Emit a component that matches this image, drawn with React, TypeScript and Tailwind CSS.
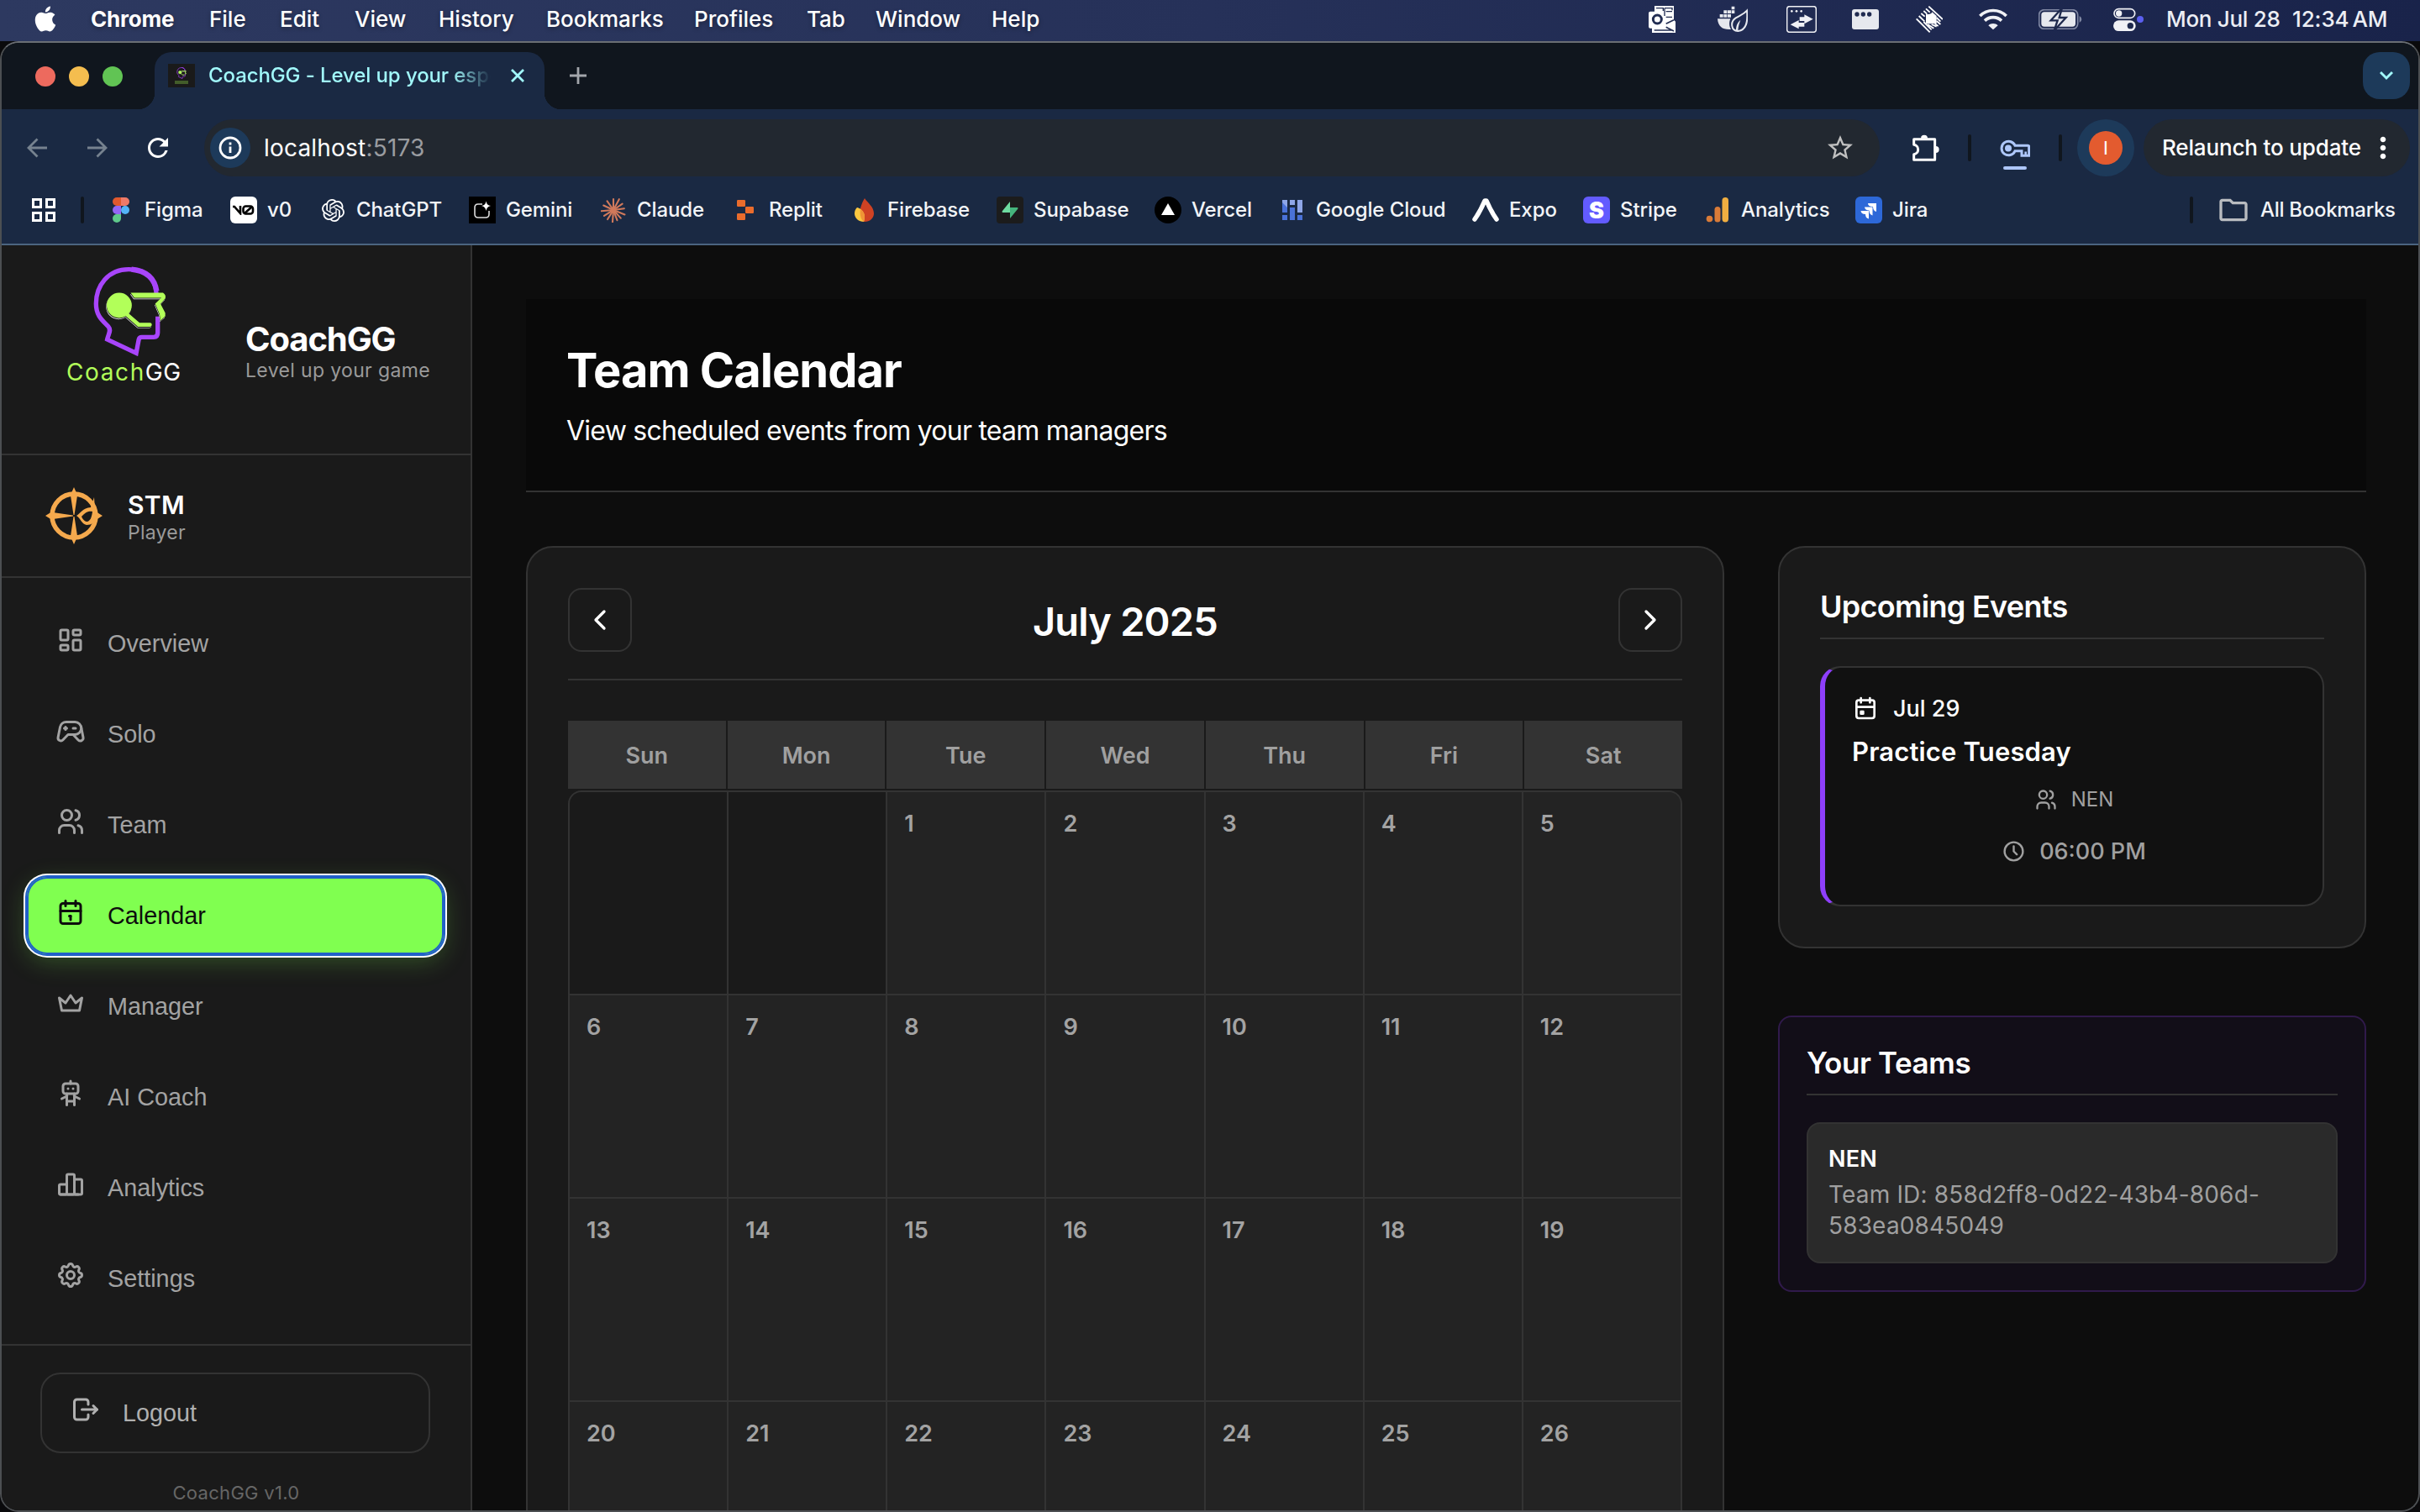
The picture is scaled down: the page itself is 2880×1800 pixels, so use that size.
import React from "react";
import {
  TbLayoutDashboard,
  TbDeviceGamepad2,
  TbUsers,
  TbCalendar,
  TbCrown,
  TbRobot,
  TbChartBar,
  TbSettings,
  TbLogout,
  TbCalendarEvent,
  TbClock,
  TbChevronLeft,
  TbChevronRight,
} from "react-icons/tb";
import { MdStarOutline, MdOutlineFolder, MdRefresh, MdMoreVert } from "react-icons/md";
import { SiOpenai, SiApple } from "react-icons/si";

/* ---------- macOS menu bar ---------- */

const menus = [
  { label: "Chrome", cls: "w-[141px] font-bold tracking-[-0.2px]" },
  { label: "File", cls: "w-[84px]" },
  { label: "Edit", cls: "w-[89px]" },
  { label: "View", cls: "w-[100px]" },
  { label: "History", cls: "w-[128px]" },
  { label: "Bookmarks", cls: "w-[176px]" },
  { label: "Profiles", cls: "w-[134px]" },
  { label: "Tab", cls: "w-[82px]" },
  { label: "Window", cls: "w-[138px]" },
  { label: "Help", cls: "w-[80px]" },
];

function OutlookIcon() {
  return (
    <svg className="h-8 w-8" viewBox="0 0 96 96" fill="none">
      <path d="M21 0h69v50l6 6v40H12V80H6a6 6 0 0 1-6-6V26a6 6 0 0 1 6-6h15z" fill="#fff" />
      <path d="M27 8h25v10M57 8h27v8M62 20h22M62 40h22M57 8v28" stroke="#222d52" strokeWidth="4" />
      <circle cx="31" cy="48" r="15" stroke="#222d52" strokeWidth="9" />
      <path d="M62 64l28-14M62 76l28 14M20 87h62" stroke="#222d52" strokeWidth="5" />
    </svg>
  );
}

function WhaleLeafIcon() {
  return (
    <svg className="h-8 w-9" viewBox="0 0 108 96" fill="#e6e8ee">
      <path d="M50 2h11v11H50zM22 16h12v11H22zM36 16h12v11H36zM50 16h11v11H50zM8 30h12v11H8zM22 30h12v11H22zM36 30h12v11H36z" />
      <path d="M0 46h46c-6 14-4 28 2 38-28 2-46-8-48-38z" />
      <path d="M105 17c4 40-2 70-32 73-26-2-28-34-8-47 14-9 28-12 40-26z" fill="none" stroke="#e6e8ee" strokeWidth="6" />
      <path d="M66 88c0-18 5-28 16-38-4 12-8 22-9 38z" />
    </svg>
  );
}

function TransferIcon() {
  return (
    <svg className="h-8 w-9" viewBox="0 0 108 96" fill="#f0f1f5">
      <rect x="2" y="2" width="104" height="92" rx="9" fill="none" stroke="#f0f1f5" strokeWidth="4.5" />
      <circle cx="19" cy="19" r="4" />
      <circle cx="36" cy="19" r="4" />
      <circle cx="53" cy="19" r="4" />
      <path d="M47 40h17V31l31 16-31 17V54H47z" />
      <path d="M64 60H44V51L14 67l30 15V74h20z" />
    </svg>
  );
}

function PanelIcon() {
  return (
    <svg className="h-6 w-8" viewBox="0 0 96 72">
      <rect width="96" height="72" rx="9" fill="#e6e8ee" />
      <circle cx="18" cy="18" r="8" fill="#202b50" />
      <circle cx="40" cy="18" r="8" fill="#202b50" />
      <circle cx="62" cy="18" r="8" fill="#202b50" />
    </svg>
  );
}

function StripedDiamondIcon() {
  return (
    <svg className="h-8 w-8" viewBox="0 0 96 96">
      <g stroke="#fff" strokeWidth="5.5">
        <path d="M46 2L96 48M36 10l14 13M28 18l12 11M19 27l13 11M11 36l20 19M2 46l48 48M28 57l28 28M42 66l22 14M56 66l18 8M68 64l12 8M74 54l14 12M74 42l14 14" />
      </g>
      <path d="M36 30q20 2 22-8l16 14v28H36z" fill="#fff" />
    </svg>
  );
}

function WifiIcon() {
  return (
    <svg className="h-[26px] w-[34px]" viewBox="0 0 102 76" fill="none" stroke="#f0f1f5" strokeWidth="11">
      <path d="M4 26C30 0 72 0 98 26" />
      <path d="M21 43c17-16 43-16 60 0" />
      <path d="M51 75L34 60c9-9 25-9 34 0z" fill="#f0f1f5" stroke="none" />
    </svg>
  );
}

function BatteryIcon() {
  return (
    <svg className="h-6 w-[52px]" viewBox="0 0 156 72">
      <rect x="2" y="2" width="138" height="68" rx="18" fill="none" stroke="#8088a3" strokeWidth="5" />
      <rect x="10" y="10" width="122" height="52" rx="11" fill="#e6e8ee" />
      <path d="M146 24q8 4 8 12t-8 12z" fill="#8088a3" />
      <path d="M84-4L44 40h24l-12 36 42-46H74z" fill="#e6e8ee" stroke="#1e294d" strokeWidth="7" />
    </svg>
  );
}

function ControlCenterIcon() {
  return (
    <svg className="h-7 w-9" viewBox="0 0 108 84">
      <rect x="3" y="5" width="74" height="32" rx="16" fill="none" stroke="#f0f1f5" strokeWidth="5" />
      <circle cx="20" cy="21" r="11" fill="#f0f1f5" />
      <rect x="0" y="46" width="80" height="38" rx="19" fill="#f0f1f5" />
      <circle cx="61" cy="65" r="11" fill="#1e294d" />
      <circle cx="96" cy="42" r="12" fill="#5b5ff0" />
    </svg>
  );
}

function MenuBar() {
  return (
    <div className="flex h-[49px] items-start bg-gradient-to-r from-[#2d3960] via-[#263159] to-[#19234a] text-[26px] font-medium leading-none text-white">
      <div className="flex h-[45px] w-full items-center">
        <SiApple className="ml-[39px] h-[31px] w-[30px]" />
        <div className="ml-[39px] flex [text-shadow:0_2px_5px_rgba(0,0,0,0.35)]">
          {menus.map((m) => (
            <span key={m.label} className={m.cls}>
              {m.label}
            </span>
          ))}
        </div>
        <div className="ml-auto flex items-center">
          <div className="flex w-[82px]"><OutlookIcon /></div>
          <div className="flex w-[82px]"><WhaleLeafIcon /></div>
          <div className="flex w-[78px]"><TransferIcon /></div>
          <div className="flex w-[76px]"><PanelIcon /></div>
          <div className="flex w-[75px]"><StripedDiamondIcon /></div>
          <div className="flex w-[71px]"><WifiIcon /></div>
          <div className="flex w-[89px]"><BatteryIcon /></div>
          <div className="flex w-[63px]"><ControlCenterIcon /></div>
          <span className="w-[150px] whitespace-nowrap tracking-[-0.3px] text-[#eceef4]">Mon Jul 28</span>
          <span className="w-[152px] whitespace-nowrap tracking-[-0.1px] [word-spacing:-3px] text-[#eceef4]">12:34 AM</span>
        </div>
      </div>
    </div>
  );
}

/* ---------- Brand drawings ---------- */

function HeadLogo({ className }: { className?: string }) {
  const green = (
    <>
      <circle cx="426" cy="431" r="45" stroke="none" />
      <path d="M453 463L496 500.500H536" fill="none" strokeWidth="14" strokeLinecap="round" />
      <path d="M467 386h116q12 8 8 20l-17 20 17 32v12l-17 15-3-22-16-38 22-21h-97z" stroke="none" />
    </>
  );
  return (
    <svg className={className} viewBox="333 291 262 322">
      <path
        d="M559 388C557 332 520 302 460 302c-74 0-117 58-117 123 0 48 28 64 44 82 12 14 0 26-4 46l104 49 9-48q2-9 11-9h43q14 0 14-16v-58"
        fill="none"
        stroke="#a845fb"
        strokeWidth="16"
      />
      <path d="M470 302c60 6 84 40 90 78" fill="none" stroke="#a845fb" strokeWidth="19" />
      <g fill="#fff" stroke="#fff" transform="translate(-2 5)">{green}</g>
      <g fill="#1a1a1a" stroke="#1a1a1a" transform="translate(-1 3)">{green}</g>
      <g fill="#b2ff59" stroke="#b2ff59">{green}</g>
    </svg>
  );
}

function CompassLogo() {
  return (
    <svg className="h-[68px] w-[68px]" viewBox="0 0 68 68" fill="#f5a94d">
      <circle cx="34" cy="34" r="26" fill="none" stroke="#f5a94d" strokeWidth="5.500" />
      <path d="M34 0l4 9h-8zM34 68l4-9h-8zM0 34l8-5v10zM68 34l-8-5v10z" />
      <path d="M30 10h8l-3.500 23h-1zM30 58h8l-3.500-23h-1zM9 30v8l24-3.500v-1z" />
      <path d="M37 34c5-3 7-9 17-10l4-12 1 14 1 8c-1 8-5 11-11 11-6-1-7-8-12-11zm6 1c2 4 4 6 7 6 3-1 5-4 6-12-6-1-9 2-13 6z" fillRule="evenodd" />
    </svg>
  );
}

/* ---------- Browser chrome ---------- */

function TabStrip() {
  return (
    <div className="flex h-[79px] bg-[#10161e]">
      <div className="flex w-[162px] items-center gap-4 pl-[40px]">
        <i className="h-6 w-6 rounded-full bg-[#ed6a5e]" />
        <i className="h-6 w-6 rounded-full bg-[#f4bd4f]" />
        <i className="h-6 w-6 rounded-full bg-[#61c454]" />
      </div>
      <i className="mt-auto h-5 w-5 bg-[radial-gradient(circle_at_0_0,#10161e_20px,#1a2943_20.500px)]" />
      <div className="mt-[11px] flex w-[464px] items-center rounded-t-[20px] bg-[#1a2943] pb-[12px]">
        <div className="ml-4 flex h-7 w-8 flex-col items-center justify-center bg-[#1a1a1a]">
          <HeadLogo className="h-3.5 w-3" />
          <i className="mt-0.5 h-1 w-4 bg-[#5f8a35]/60" />
        </div>
        <span className="ml-4 w-[340px] overflow-hidden whitespace-nowrap text-[24px] font-medium leading-[34px] tracking-[-0.1px] text-[#a1f8fb] [mask-image:linear-gradient(to_right,#000_290px,transparent_336px)]">
          CoachGG - Level up your esports
        </span>
        <svg className="ml-5 h-4 w-4" viewBox="0 0 16 16" stroke="#a1f8fb" strokeWidth="2.800">
          <path d="M1 1l14 14M15 1L1 15" />
        </svg>
      </div>
      <i className="mt-auto h-5 w-5 bg-[radial-gradient(circle_at_100%_0,#10161e_20px,#1a2943_20.500px)]" />
      <svg className="ml-2.5 mt-[29px] h-5 w-5" viewBox="0 0 20 20" stroke="#a3a6ab" strokeWidth="2.800">
        <path d="M10 0v20M0 10h20" />
      </svg>
      <div className="ml-auto mr-2.5 mt-[11px] flex h-14 w-14 items-center justify-center rounded-[20px] bg-[#1d3a5a]">
        <svg className="h-3 w-4" viewBox="0 0 16 12" fill="none" stroke="#a1f8fb" strokeWidth="3">
          <path d="M1 2l7 7 7-7" />
        </svg>
      </div>
    </div>
  );
}

function Toolbar() {
  return (
    <div className="flex h-[92px] items-center">
      <div className="flex w-[241px] items-center">
        <svg className="ml-[30px] h-6 w-6" viewBox="0 0 24 24" fill="none" stroke="#76828f" strokeWidth="2.800">
          <path d="M24 12H2M12.500 1.500L2 12l10.500 10.500" />
        </svg>
        <svg className="ml-[48px] h-6 w-6" viewBox="0 0 24 24" fill="none" stroke="#76828f" strokeWidth="2.800">
          <path d="M0 12h22M11.500 1.500L22 12 11.500 22.500" />
        </svg>
        <MdRefresh className="ml-[42px] h-9 w-9 text-white" />
      </div>
      <div className="flex h-[68px] w-[1994px] items-center rounded-full bg-[#222830]">
        <div className="ml-[7px] flex h-12 w-12 items-center justify-center rounded-full bg-[#1d3a5a]">
          <svg className="h-7 w-7" viewBox="0 0 28 28" fill="none" stroke="#fff" strokeWidth="2.800">
            <circle cx="14" cy="14" r="12" />
            <path d="M14 12.500v7.500M14 7.500v3" />
          </svg>
        </div>
        <span className="ml-4 text-[28px] leading-none tracking-[0.200px] text-white">
          localhost<span className="text-[#9a9ca0]">:5173</span>
        </span>
        <MdStarOutline className="ml-auto mr-[29px] h-9 w-9 text-[#c0c0c0]" />
      </div>
      <svg className="ml-[39px] h-8 w-8" viewBox="0 0 96 96" fill="none" stroke="#fff" strokeWidth="9" strokeLinejoin="round">
        <path d="M5 17h75v74H5V71c9-1 15-8 15-17S14 38 5 37z" />
        <path d="M30 14a12 12 0 0 1 24 0zM83 42a12 12 0 0 1 0 24z" fill="#fff" stroke="none" />
      </svg>
      <i className="ml-[34px] h-8 w-1 rounded-full bg-[#10161e]" />
      <div className="ml-[34px] mt-4 flex flex-col items-center gap-[11px]">
        <svg className="h-[21px] w-9" viewBox="0 0 108 60" fill="none" stroke="#aec7fa" strokeWidth="9">
          <path d="M54 20h46q4 0 4 4v32H78V40H54a25 25 0 1 1 0-20z" />
          <path d="M92 56V42" strokeWidth="8" />
          <circle cx="30" cy="30" r="12" fill="#aec7fa" stroke="none" />
        </svg>
        <i className="h-1 w-7 rounded-full bg-[#aec7fa]" />
      </div>
      <i className="ml-[34px] h-8 w-1 rounded-full bg-[#10161e]" />
      <div className="ml-[18px] flex h-[68px] w-[68px] items-center justify-center rounded-full bg-[#1d3a5a]">
        <div className="flex h-10 w-10 items-center justify-center rounded-full bg-[#e35b2f] text-[22px] leading-none text-white">I</div>
      </div>
      <div className="ml-[11px] flex h-[68px] w-[317px] items-center rounded-full bg-[#222830]">
        <span className="ml-[22px] w-[244px] whitespace-nowrap text-[26px] font-medium leading-none tracking-[-0.150px] text-white">Relaunch to update</span>
        <MdMoreVert className="-ml-px h-10 w-10 text-white" />
      </div>
    </div>
  );
}

const rays = [0, 28, 55, 82, 112, 138, 160, 184, 212, 238, 265, 295, 325];

function ClaudeMark() {
  return (
    <svg className="h-[30px] w-[30px]" viewBox="-15 -15 30 30" stroke="#d0795b" strokeWidth="2.100" strokeLinecap="round">
      {rays.map((a, i) => (
        <path key={a} d={i % 3 === 1 ? "M0 0V-14.500" : "M0 0V-13"} transform={`rotate(${a})`} />
      ))}
    </svg>
  );
}

const bookmarks: { label: string; cls: string; icon: React.ReactNode }[] = [
  {
    label: "Figma",
    cls: "w-[146px]",
    icon: (
      <svg className="h-[30px] w-5" viewBox="0 0 20 30">
        <path d="M10 0H5a5 5 0 0 0 0 10h5z" fill="#e0592e" />
        <path d="M10 0h5a5 5 0 0 1 0 10h-5z" fill="#ee7a68" />
        <path d="M10 10H5a5 5 0 0 0 0 10h5z" fill="#9466f5" />
        <circle cx="15" cy="15" r="5" fill="#54b4f8" />
        <path d="M10 20H5a5 5 0 1 0 5 5z" fill="#5fc98b" />
      </svg>
    ),
  },
  {
    label: "v0",
    cls: "w-[106px]",
    icon: (
      <div className="flex h-8 w-8 items-center justify-center rounded-md bg-white">
        <svg className="h-3 w-[26px]" viewBox="0 0 26 12" fill="none" stroke="#000" strokeWidth="2.600">
          <path d="M0 2h2l7 8V1" />
          <rect x="12.500" y="1.500" width="11.500" height="9" rx="3" />
          <path d="M14 10l9-8" />
        </svg>
      </div>
    ),
  },
  { label: "ChatGPT", cls: "w-[178px]", icon: <SiOpenai className="h-[27px] w-[27px] text-white" /> },
  {
    label: "Gemini",
    cls: "w-[156px]",
    icon: (
      <svg className="h-8 w-8 bg-black" viewBox="0 0 32 32" fill="none">
        <path d="M16 9h-5q-4 0-4 4v8q0 4 4 4h9q4 0 4-4v-4" stroke="#ddd" strokeWidth="1.600" />
        <path d="M20.500 5.500q.8 5 5.500 5.500-4.700.8-5.500 6-.8-5.200-5.500-6 4.700-.5 5.500-5.500z" fill="#fff" />
      </svg>
    ),
  },
  { label: "Claude", cls: "w-[157px]", icon: <ClaudeMark /> },
  {
    label: "Replit",
    cls: "w-[141px]",
    icon: (
      <svg className="h-6 w-5" viewBox="0 0 20 24" fill="#ea6c2c">
        <rect width="10" height="8" rx="1.200" />
        <rect x="10" y="8" width="10" height="8" rx="1.200" />
        <rect y="16" width="10" height="8" rx="1.200" />
      </svg>
    ),
  },
  {
    label: "Firebase",
    cls: "w-[174px]",
    icon: (
      <svg className="h-7 w-[23px]" viewBox="0 0 23 28">
        <path d="M12 0c3 5 11 10 11 18 0 6-5 10-11 10-4 0-6-4-6-8C6 12 9 5 12 0z" fill="#cf4223" />
        <path d="M3 11c5 1 9 6 9 11 0 3-1 6-1 6-6 0-11-4-11-10 0-3 1-5 3-7z" fill="#fbc740" />
        <path d="M7 13c3 2 5 5 5 9 0 3-1 6-1 6-4-3-5-9-4-15z" fill="#ef9536" />
      </svg>
    ),
  },
  {
    label: "Supabase",
    cls: "w-[188px]",
    icon: (
      <svg className="h-8 w-8 rounded bg-[#1c1c1c]" viewBox="0 0 32 32">
        <path d="M16 6v13H7q-1-1 0-2z" fill="#6edca0" />
        <path d="M16 26V13h9q1 1 0 2z" fill="#45b47c" />
      </svg>
    ),
  },
  {
    label: "Vercel",
    cls: "w-[148px]",
    icon: (
      <svg className="h-8 w-8" viewBox="0 0 32 32">
        <circle cx="16" cy="16" r="16" />
        <path d="M16 8l8 14H8z" fill="#fff" />
      </svg>
    ),
  },
  {
    label: "Google Cloud",
    cls: "w-[230px]",
    icon: (
      <svg className="h-6 w-6" viewBox="0 0 24 24">
        <path d="M0 0h6v15H0zM9 0h6v6H9zM18 0h6v15h-6z" fill="#8ea6e8" />
        <path d="M0 3l6 6v6H0zM0 18h6v6H0zM9 9h6v15H9zM18 18h6v6h-6z" fill="#4a72d8" />
      </svg>
    ),
  },
  {
    label: "Expo",
    cls: "w-[132px]",
    icon: (
      <svg className="h-7 w-8" viewBox="0 0 32 28" fill="none" stroke="#fff" strokeWidth="5.500" strokeLinecap="round" strokeLinejoin="round">
        <path d="M3 25C8 18 12 10 15 3h2c3 7 7 15 12 22" />
      </svg>
    ),
  },
  {
    label: "Stripe",
    cls: "w-[144px]",
    icon: <div className="flex h-8 w-8 items-center justify-center rounded-md bg-[#635bff] text-[27px] font-black leading-none text-white">S</div>,
  },
  {
    label: "Analytics",
    cls: "w-[180px]",
    icon: (
      <svg className="h-[30px] w-7" viewBox="0 0 28 30">
        <circle cx="4.500" cy="25.500" r="3.800" fill="#d97b38" />
        <rect x="10.500" y="11" width="7" height="18.500" rx="3.500" fill="#d97b38" />
        <rect x="19.500" y="0" width="7.500" height="29.500" rx="3.700" fill="#f0ae41" />
      </svg>
    ),
  },
  {
    label: "Jira",
    cls: "w-[100px]",
    icon: (
      <svg className="h-8 w-8 rounded-md bg-[#2d68d8]" viewBox="0 0 32 32" fill="#fff">
        <path d="M15 8h10v10q-4-1-4-6-6 0-6-4z" />
        <path d="M11 12.500h9.500v10q-4-1-4-6-5 0-5.500-4z" />
        <path d="M6.500 17h9.500v9.500q-4-1-4-5.500-5 0-5.500-4z" />
      </svg>
    ),
  },
];

function BookmarksBar() {
  return (
    <div className="flex h-[68px] items-center pb-3 text-[24px] font-medium leading-none tracking-[-0.100px] text-[#f2f4f7]">
      <div className="ml-[36px] grid w-7 grid-cols-2 gap-1">
        <i className="h-3 w-3 border-[3px] border-white" />
        <i className="h-3 w-3 border-[3px] border-white" />
        <i className="h-3 w-3 border-[3px] border-white" />
        <i className="h-3 w-3 border-[3px] border-white" />
      </div>
      <i className="ml-[30px] mr-7 h-8 w-1 rounded-full bg-[#10161e]" />
      {bookmarks.map((b) => (
        <div key={b.label} className={`flex items-center gap-3 whitespace-nowrap ${b.cls}`}>
          <span className="flex w-8 shrink-0 items-center justify-center">{b.icon}</span>
          <span>{b.label}</span>
        </div>
      ))}
      <i className="ml-auto h-8 w-1 rounded-full bg-[#10161e]" />
      <MdOutlineFolder className="ml-7 h-10 w-10 text-[#b9bcc0]" />
      <span className="ml-3 w-[188px] whitespace-nowrap tracking-[-0.300px]">All Bookmarks</span>
    </div>
  );
}

/* ---------- Sidebar ---------- */

const nav = [
  { label: "Overview", Icon: TbLayoutDashboard },
  { label: "Solo", Icon: TbDeviceGamepad2 },
  { label: "Team", Icon: TbUsers },
  { label: "Calendar", Icon: TbCalendar, active: true },
  { label: "Manager", Icon: TbCrown },
  { label: "AI Coach", Icon: TbRobot },
  { label: "Analytics", Icon: TbChartBar },
  { label: "Settings", Icon: TbSettings },
];

function Sidebar() {
  return (
    <aside className="flex w-[560px] shrink-0 flex-col border-r-2 border-[#333] bg-[#1a1a1a]">
      <div className="flex h-[250px] shrink-0 border-b-2 border-[#333]">
        <div className="ml-[77px] w-[150px] pt-[25px]">
          <HeadLogo className="ml-8 h-[107px] w-[87px]" />
          <div className="mt-[5px] whitespace-nowrap text-[28px] font-normal leading-[28px] tracking-[1.600px] text-[#b2ff59]">
            Coach<span className="tracking-[0.500px] text-white">GG</span>
          </div>
        </div>
        <div className="ml-[63px] pt-[92px]">
          <div className="text-[40px] font-bold leading-[40px] tracking-[-1.100px] text-white">CoachGG</div>
          <div className="mt-[3px] text-[23px] leading-[28px] tracking-[0.350px] text-[#9a9a9a]">Level up your game</div>
        </div>
      </div>
      <div className="flex h-[146px] shrink-0 items-center border-b-2 border-[#333] pl-[52px]">
        <CompassLogo />
        <div className="ml-[30px] mt-1.5">
          <div className="text-[30px] font-semibold leading-[34px] tracking-[0.300px] text-white">STM</div>
          <div className="text-[23px] leading-[32px] tracking-[0.250px] text-[#9a9a9a]">Player</div>
        </div>
      </div>
      <nav className="flex flex-col gap-4 py-8 pl-[30px] pr-8 font-['Liberation_Sans',sans-serif] text-[28.8px] leading-none">
        {nav.map(({ label, Icon, active }) => (
          <a
            key={label}
            className={
              active
                ? "flex h-[92px] items-center rounded-3xl bg-[#80ff50] pl-[34px] text-[#0d0d0d] shadow-[inset_0_0_0_2px_#2160c8,0_0_0_2px_#2160c8,0_0_0_4px_#fff,0_8px_30px_rgba(128,255,80,0.25)]"
                : "flex h-[92px] items-center rounded-3xl pl-[34px] text-[#a3a3a3]"
            }
          >
            <Icon className="mb-2 mr-[26px] h-9 w-9" />
            {label}
          </a>
        ))}
      </nav>
      <div className="flex shrink-0 flex-col border-t-2 border-[#333] pt-8">
        <div className="ml-[46px] flex h-24 w-[464px] items-center rounded-3xl border-2 border-[#333] pl-[34px] font-['Liberation_Sans',sans-serif] text-[28.8px] leading-none text-[#b0b0b0]">
          <TbLogout className="mb-2 mr-[26px] h-9 w-9" />
          Logout
        </div>
        <div className="mt-8 text-center text-[22px] leading-[30px] tracking-[0.300px] text-[#666]">CoachGG v1.0</div>
      </div>
    </aside>
  );
}

/* ---------- Main ---------- */

const weekdays = ["Sun", "Mon", "Tue", "Wed", "Thu", "Fri", "Sat"];
const cells = [null, null, ...Array.from({ length: 26 }, (_, i) => i + 1)];

function CalendarCard() {
  return (
    <section className="h-[1400px] w-[1426px] rounded-[32px] border-2 border-[#333] bg-[#1a1a1a] p-12">
      <div className="flex items-center justify-between border-b-2 border-[#333] pb-8">
        <button className="flex h-[76px] w-[76px] items-center justify-center rounded-2xl border-2 border-[#333] text-white">
          <TbChevronLeft className="h-10 w-10" />
        </button>
        <h2 className="pt-[3px] text-[47px] font-semibold leading-none tracking-[-0.800px] text-white">July 2025</h2>
        <button className="flex h-[76px] w-[76px] items-center justify-center rounded-2xl border-2 border-[#333] text-white">
          <TbChevronRight className="h-10 w-10" />
        </button>
      </div>
      <div className="mt-12 grid h-[81px] grid-cols-7 gap-0.5">
        {weekdays.map((d) => (
          <div key={d} className="flex items-center justify-center bg-[#333] pt-0.5 text-[27px] font-semibold leading-none text-[#a0a0a0]">
            {d}
          </div>
        ))}
      </div>
      <div className="mt-0.5 grid auto-rows-[240px] grid-cols-7 gap-0.5 overflow-hidden rounded-2xl border-2 border-[#333] bg-[#333]">
        {cells.map((c, i) => (
          <div key={i} className={c === null ? "bg-[#1a1a1a]" : "bg-[#232323] pl-5 pt-6 text-[27px] font-semibold leading-[28px] text-[#a3a3a3]"}>
            {c}
          </div>
        ))}
      </div>
    </section>
  );
}

function UpcomingEvents() {
  return (
    <section className="rounded-[32px] border-2 border-[#333] bg-[#1a1a1a] p-12">
      <h3 className="border-b-2 border-[#333] pb-[15px] text-[36px] font-semibold leading-[44px] tracking-[-0.700px] text-white">Upcoming Events</h3>
      <div className="mt-8 h-[286px] rounded-3xl border-2 border-l-[6px] border-[#333] border-l-[#8e3ffb] bg-[#111] px-8 pt-8">
        <div className="flex h-[34px] items-center pb-px text-[27px] font-medium leading-none text-white">
          <TbCalendarEvent className="mb-0.5 mr-[17px] h-8 w-8" />
          Jul 29
        </div>
        <div className="mt-4 text-[31px] font-semibold leading-9 tracking-[0.150px] text-white">Practice Tuesday</div>
        <div className="mt-6 flex h-[30px] items-center justify-center text-[24px] leading-none text-[#a0a0a0]">
          <TbUsers className="mr-4 h-7 w-7" />
          NEN
        </div>
        <div className="mt-[29px] flex h-[34px] items-center justify-center text-[27px] font-medium leading-none text-[#a0a0a0]">
          <TbClock className="mr-4 h-[29px] w-[29px]" />
          06:00 PM
        </div>
      </div>
    </section>
  );
}

function YourTeams() {
  return (
    <section className="mt-20 rounded-2xl border-2 border-[#301a4b] bg-[#120e18] p-8">
      <h3 className="border-b-2 border-[#333] pb-[15px] text-[35px] font-semibold leading-[44px] tracking-[-0.400px] text-white">Your Teams</h3>
      <div className="mt-8 h-[168px] rounded-2xl border-2 border-[#333] bg-[#2a2a2a] px-6 pt-6">
        <div className="pt-px text-[27px] font-semibold leading-[34px] tracking-[0.200px] text-white">NEN</div>
        <div className="mt-[7px] whitespace-nowrap text-[28px] leading-[37px] tracking-[0.160px] text-[#a0a0a0]">
          Team ID: 858d2ff8-0d22-43b4-806d-
          <br />
          583ea0845049
        </div>
      </div>
    </section>
  );
}

export default function App() {
  return (
    <div className="h-[1800px] w-[2880px] overflow-hidden bg-[#0a0a0c] font-['Inter',sans-serif]">
      <MenuBar />
      <div className="flex h-[1751px] w-full flex-col overflow-hidden rounded-[22px] border-2 border-[#4c4f52] border-t-[#6a6e74] bg-[#0d0d0d]">
        <TabStrip />
        <div className="shrink-0 border-b-2 border-[#4b6480] bg-[#1a2943]">
          <Toolbar />
          <BookmarksBar />
        </div>
        <div className="flex min-h-0 flex-1 overflow-hidden">
          <Sidebar />
          <main className="min-w-0 flex-1 overflow-hidden pl-16 pr-[62px] pt-16">
            <header className="h-[230px] border-b-2 border-[#333] bg-[#090909] pl-12 pt-[50px]">
              <h1 className="text-[56px] font-bold leading-[70px] tracking-[-1px] text-white">Team Calendar</h1>
              <p className="mt-[13px] text-[32px] leading-[48px] tracking-[-0.750px] text-white">View scheduled events from your team managers</p>
            </header>
            <div className="mt-16 flex gap-16">
              <CalendarCard />
              <div className="w-[700px]">
                <UpcomingEvents />
                <YourTeams />
              </div>
            </div>
          </main>
        </div>
      </div>
    </div>
  );
}
